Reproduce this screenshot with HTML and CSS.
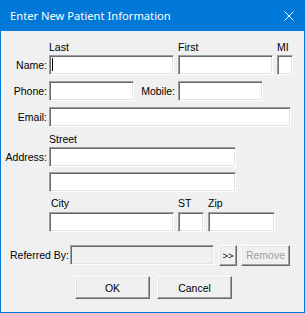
FILE: index.html
```html
<!DOCTYPE html>
<html>
<head>
<meta charset="utf-8">
<link rel="stylesheet" href="styles.css">
</head>
<body>
<div class="window">
  <div class="titlebar">
    <span class="title">Enter New Patient Information</span>
    <svg class="close" width="10" height="10" viewBox="0 0 10 10"><path d="M0.5 0.5 L9.5 9.5 M9.5 0.5 L0.5 9.5" stroke="#fff" stroke-width="1" fill="none"/></svg>
  </div>
  <div class="content">
    <div class="heads heads-name">
      <span class="h-last">Last</span>
      <span class="h-first">First</span>
      <span class="h-mi">MI</span>
    </div>
    <div class="row row-name">
      <label class="lbl">Name:</label>
      <div class="field w-last"><span class="caret"></span></div>
      <div class="field w-first gap"></div>
      <div class="field w-mi gap"></div>
    </div>
    <div class="row row-phone">
      <label class="lbl">Phone:</label>
      <div class="field w-phone"></div>
      <label class="lbl-mobile">Mobile:</label>
      <div class="field w-phone"></div>
    </div>
    <div class="row row-email">
      <label class="lbl">Email:</label>
      <div class="field w-email"></div>
    </div>
    <div class="heads heads-street">
      <span>Street</span>
    </div>
    <div class="row row-addr1">
      <label class="lbl">Address:</label>
      <div class="field w-street"></div>
    </div>
    <div class="row row-addr2">
      <span class="lbl"></span>
      <div class="field w-street"></div>
    </div>
    <div class="heads heads-city">
      <span class="h-city">City</span>
      <span class="h-st">ST</span>
      <span class="h-zip">Zip</span>
    </div>
    <div class="row row-city">
      <span class="lbl"></span>
      <div class="field w-city"></div>
      <div class="field w-st gap"></div>
      <div class="field w-zip gap"></div>
    </div>
    <div class="row row-ref">
      <label class="lbl-ref">Referred By:</label>
      <div class="field disabled w-ref"></div>
      <button class="btn btn-more">&gt;&gt;</button>
      <button class="btn btn-remove" disabled>Remove</button>
    </div>
    <div class="actions">
      <button class="btn btn-main">OK</button>
      <button class="btn btn-main">Cancel</button>
    </div>
  </div>
</div>
</body>
</html>
```
FILE: styles.css
```css
html, body {
  margin: 0;
  padding: 0;
  background: #f0f0f0;
}
.window {
  width: 305px;
  height: 313px;
  box-sizing: border-box;
  border: 1px solid #0078d7;
  border-top: none;
  background: #f0f0f0;
  font-family: "Liberation Sans", Arial, sans-serif;
  font-size: 10.5px;
  color: #000;
}
.titlebar {
  height: 31px;
  margin: 0 -1px;
  background: #0078d7;
  display: flex;
  align-items: center;
  justify-content: space-between;
  padding: 0 11px 0 10px;
}
.title {
  color: #fff;
  font-family: "Noto Sans", "Liberation Sans", sans-serif;
  font-size: 11.2px;
  line-height: 16px;
}
.close {
  display: block;
}
.content {
  display: flex;
  flex-direction: column;
}
.heads {
  display: flex;
  height: 13px;
  line-height: 13px;
  padding-left: 48px;
  white-space: nowrap;
}
.heads-name { margin-top: 10px; }
.h-last { width: 129px; }
.h-first { width: 99px; }
.heads-street { margin-top: 6px; }
.heads-city { margin-top: 5px; }
.h-city { width: 127px; padding-left: 2px; }
.h-st { width: 30px; }
.row {
  display: flex;
  align-items: center;
  height: 20px;
  white-space: nowrap;
}
.row-name { margin-top: 1px; }
.row-phone { margin-top: 6px; }
.row-email { margin-top: 6px; }
.row-addr1 { margin-top: 1px; }
.row-addr2 { margin-top: 5px; }
.row-city { margin-top: 2px; }
.row-ref { margin-top: 13px; }
.lbl {
  width: 48px;
  box-sizing: border-box;
  padding-right: 2px;
  text-align: right;
}
.lbl-mobile {
  width: 44px;
  box-sizing: border-box;
  padding-right: 3px;
  text-align: right;
}
.lbl-ref {
  width: 69px;
  box-sizing: border-box;
  padding-left: 9px;
  white-space: nowrap;
}
.field {
  height: 20px;
  box-sizing: border-box;
  background: #fff;
  border: 1px solid;
  border-color: #a0a0a0 #fff #fff #a0a0a0;
  box-shadow: inset 1px 1px 0 #696969, inset -1px -1px 0 #e3e3e3;
  position: relative;
}
.field.disabled { background: #f0f0f0; }
.gap { margin-left: 4px; }
.w-last { width: 125px; }
.w-first { width: 95px; }
.w-mi { width: 16px; }
.w-phone { width: 85px; }
.w-email { width: 242px; }
.w-street { width: 187px; }
.w-city { width: 125px; }
.w-st { width: 26px; }
.w-zip { width: 67px; }
.w-ref { width: 144px; }
.caret {
  position: absolute;
  left: 2px;
  top: 2px;
  width: 1px;
  height: 13px;
  background: #000;
}
.btn {
  font-family: "Liberation Sans", Arial, sans-serif;
  font-size: 10.5px;
  color: #000;
  background: #f0f0f0;
  box-sizing: border-box;
  border: 1px solid;
  border-color: #fff #696969 #696969 #fff;
  box-shadow: inset -1px -1px 0 #a0a0a0, inset 1px 1px 0 #e3e3e3;
  padding: 0;
  margin: 0;
}
.btn-more {
  width: 18px;
  height: 21px;
  margin-left: 5px;
  font-size: 9.5px;
}
.btn-remove {
  width: 49px;
  height: 21px;
  margin-left: 4px;
  color: #a0a0a0;
}
.actions {
  display: flex;
  gap: 7px;
  padding-left: 74px;
  margin-top: 11px;
}
.btn-main {
  width: 75px;
  height: 23px;
}
```
